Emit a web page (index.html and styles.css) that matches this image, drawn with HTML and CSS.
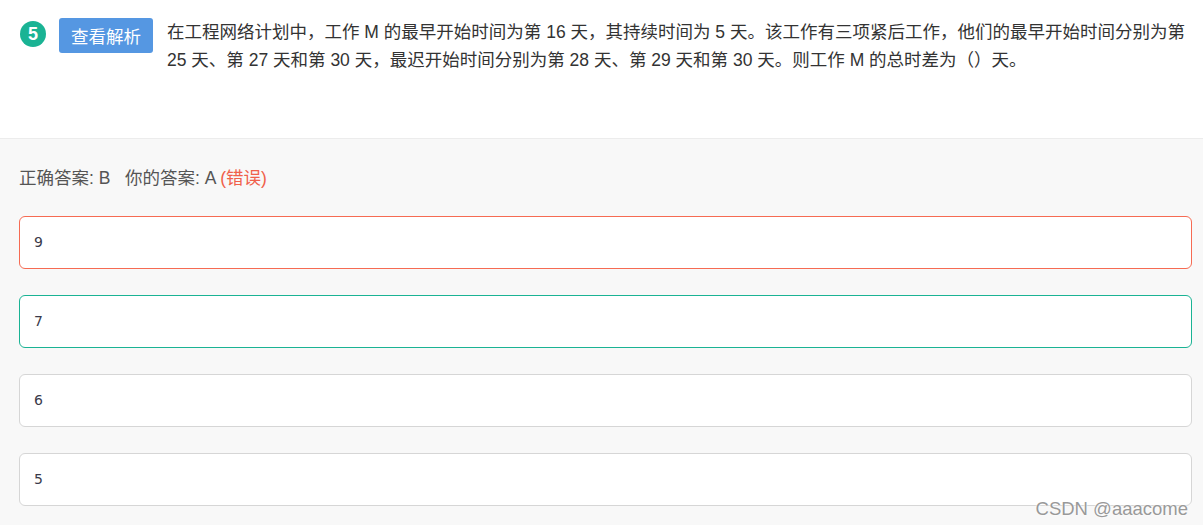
FILE: index.html
```html
<!DOCTYPE html>
<html lang="zh">
<head>
<meta charset="utf-8">
<link rel="stylesheet" href="styles.css">
</head>
<body>
<div class="page">
  <div class="question">
    <span class="num">5</span>
    <button class="btn">查看解析</button>
    <div class="qtext">在工程网络计划中，工作 M 的最早开始时间为第 16 天，其持续时间为 5 天。该工作有三项紧后工作，他们的最早开始时间分别为第 25 天、第 27 天和第 30 天，最迟开始时间分别为第 28 天、第 29 天和第 30 天。则工作 M 的总时差为（）天。</div>
  </div>
  <div class="answers">
    <div class="result">正确答案: B&nbsp;&nbsp; 你的答案: A <span class="wrong">(错误)</span></div>
    <div class="opt opt-wrong">9</div>
    <div class="opt opt-right">7</div>
    <div class="opt">6</div>
    <div class="opt">5</div>
  </div>
  <div class="watermark">CSDN @aaacome</div>
</div>
</body>
</html>
```
FILE: styles.css
```css
html, body {
  margin: 0;
  padding: 0;
}
body {
  font-family: "Liberation Sans", "Noto Sans CJK SC", sans-serif;
  background: #f8f8f8;
  color: #333;
}
.page {
  position: relative;
  width: 1203px;
  height: 525px;
  overflow: hidden;
}
.question {
  display: flex;
  align-items: flex-start;
  background: #fff;
  height: 139px;
  box-sizing: border-box;
  padding: 18px 14px 0 20px;
  border-bottom: 1px solid #ececec;
}
.num {
  flex: none;
  width: 26px;
  height: 26px;
  margin-top: 3px;
  border-radius: 50%;
  background: #1ab394;
  color: #fff;
  font-size: 18px;
  font-weight: bold;
  line-height: 26px;
  text-align: center;
}
.btn {
  flex: none;
  margin-left: 13px;
  width: 94px;
  height: 35px;
  border: none;
  border-radius: 3px;
  background: #5597e2;
  color: #fff;
  font-family: "Liberation Sans", "Noto Sans CJK SC", sans-serif;
  font-size: 17.5px;
  padding: 0;
}
.qtext {
  flex: 1;
  margin-left: 14px;
  margin-top: 0;
  font-size: 17.5px;
  line-height: 28px;
  color: #333;
}
.answers {
  padding: 27px 11px 0 19px;
}
.result {
  font-size: 17.5px;
  line-height: 24px;
  color: #555;
  margin-bottom: 26px;
}
.wrong {
  color: #f0604a;
}
.opt {
  height: 53px;
  box-sizing: border-box;
  border: 1px solid #d6d6d6;
  border-radius: 6px;
  background: #fff;
  margin-bottom: 26px;
  padding-left: 14px;
  font-family: "DejaVu Sans", sans-serif;
  font-size: 14px;
  line-height: 51px;
  color: #3a3a4a;
}
.opt-wrong {
  border-color: #f66b53;
}
.opt-right {
  border-color: #1ab394;
}
.watermark {
  position: absolute;
  right: 15px;
  bottom: 5px;
  font-family: "Liberation Sans", sans-serif;
  font-size: 18.5px;
  color: #999;
  text-shadow: 0 0 2px #fff, 0 0 2px #fff;
}
```
